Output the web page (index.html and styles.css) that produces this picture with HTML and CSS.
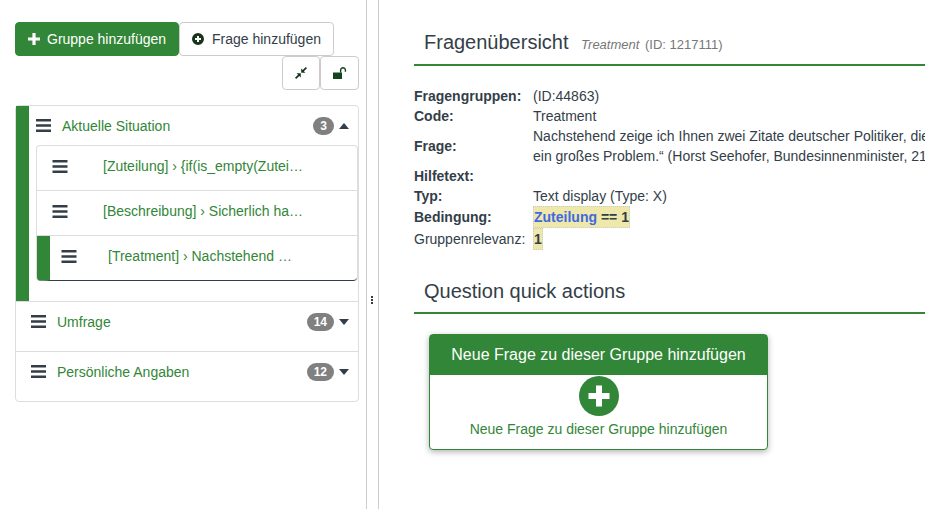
FILE: index.html
```html
<!DOCTYPE html>
<html lang="de">
  <head>
    <meta charset="UTF-8" />
    <meta name="viewport" content="width=device-width, initial-scale=1.0" />
    <title>Fragenübersicht</title>
    <link rel="stylesheet" href="styles.css">
  </head>
  <body>
    <!-- Sidebar -->
    <aside class="sidebar">
      <div class="toolbar">
        <a class="btn btn-primary" href="#">
          <svg class="btn-icon" viewBox="0 0 12 12"><path d="M4.4 0h3.2v4.4H12v3.2H7.6V12H4.4V7.6H0V4.4h4.4z" fill="#fff"/></svg>
          Gruppe hinzufügen
        </a>
        <a class="btn btn-default" href="#">
          <svg class="btn-icon" viewBox="0 0 12 12"><path fill-rule="evenodd" d="M6 0a6 6 0 1 1 0 12A6 6 0 0 1 6 0zM5 3v2H3v2h2v2h2V7h2V5H7V3z" fill="#16351b"/></svg>
          Frage hinzufügen
        </a>
      </div>
      <div class="toolbar toolbar-right">
        <a class="btn btn-default btn-square" href="#" aria-label="Einklappen">
          <svg class="btn-icon" viewBox="0 0 12 12"><path d="M12 1.200 8.900 4.300 10.400 5.800H6.200V1.600l1.500 1.500L10.800 0zM0 10.800 3.100 7.700 1.600 6.200h4.200v4.200L4.300 8.900 1.200 12z" fill="#16351b"/></svg>
        </a>
        <a class="btn btn-default btn-square" href="#" aria-label="Entsperren">
          <svg class="btn-icon btn-icon-lock" viewBox="0 0 14 12"><path d="M0 5.500h9V12H0z" fill="#14451c"/><path d="M7.600 5.500V3.200a2.400 2.400 0 0 1 4.800 0v1.600" fill="none" stroke="#14451c" stroke-width="1.400"/></svg>
        </a>
      </div>

      <div class="groups">
        <section class="group group-open">
          <div class="group-head">
            <svg class="bars" viewBox="0 0 15 13"><path d="M0 0h15v2.600H0zM0 5.200h15v2.600H0zM0 10.400h15V13H0z"/></svg>
            <a class="group-name" href="#">Aktuelle Situation</a>
            <span class="badge">3</span>
            <span class="caret caret-up"></span>
          </div>
          <ul class="questions">
            <li class="question">
              <svg class="bars" viewBox="0 0 15 13"><path d="M0 0h15v2.600H0zM0 5.200h15v2.600H0zM0 10.400h15V13H0z"/></svg>
              <a class="question-name" href="#">[Zuteilung] › {if(is_empty(Zutei…</a>
            </li>
            <li class="question">
              <svg class="bars" viewBox="0 0 15 13"><path d="M0 0h15v2.600H0zM0 5.200h15v2.600H0zM0 10.400h15V13H0z"/></svg>
              <a class="question-name" href="#">[Beschreibung] › Sicherlich ha…</a>
            </li>
            <li class="question question-active">
              <svg class="bars" viewBox="0 0 15 13"><path d="M0 0h15v2.600H0zM0 5.200h15v2.600H0zM0 10.400h15V13H0z"/></svg>
              <a class="question-name" href="#">[Treatment] › Nachstehend …</a>
            </li>
          </ul>
        </section>
        <section class="group">
          <div class="group-head">
            <svg class="bars" viewBox="0 0 15 13"><path d="M0 0h15v2.600H0zM0 5.200h15v2.600H0zM0 10.400h15V13H0z"/></svg>
            <a class="group-name" href="#">Umfrage</a>
            <span class="badge">14</span>
            <span class="caret"></span>
          </div>
        </section>
        <section class="group">
          <div class="group-head">
            <svg class="bars" viewBox="0 0 15 13"><path d="M0 0h15v2.600H0zM0 5.200h15v2.600H0zM0 10.400h15V13H0z"/></svg>
            <a class="group-name" href="#">Persönliche Angaben</a>
            <span class="badge">12</span>
            <span class="caret"></span>
          </div>
        </section>
      </div>
    </aside>

    <!-- Resize handle -->
    <div class="splitter"><span class="grip"></span></div>

    <!-- Question overview -->
    <main class="content">
      <h2 class="section-title">Fragenübersicht <small class="title-meta"><em>Treatment</em> (ID: 1217111)</small></h2>
      <table class="summary">
        <tr><th>Fragengruppen:</th><td>(ID:44863)</td></tr>
        <tr><th>Code:</th><td>Treatment</td></tr>
        <tr><th>Frage:</th><td>Nachstehend zeige ich Ihnen zwei Zitate deutscher Politiker, die<br>ein großes Problem.“ (Horst Seehofer, Bundesinnenminister, 21</td></tr>
        <tr><th>Hilfetext:</th><td></td></tr>
        <tr><th>Typ:</th><td>Text display (Type: X)</td></tr>
        <tr><th>Bedingung:</th><td><span class="expr"><a href="#">Zuteilung</a> == 1</span></td></tr>
        <tr><th class="plain">Gruppenrelevanz:</th><td><span class="expr">1</span></td></tr>
      </table>

      <h2 class="section-title section-actions">Question quick actions</h2>
      <a class="action-card" href="#">
        <div class="action-head">Neue Frage zu dieser Gruppe hinzufügen</div>
        <div class="action-body">
          <svg class="action-icon" viewBox="0 0 40 40"><circle cx="20" cy="20" r="20" fill="#328637"/><path d="M17 9.500h6V17h7.500v6H23v7.500h-6V23H9.500v-6H17z" fill="#fff"/></svg>
          <span class="action-label">Neue Frage zu dieser Gruppe hinzufügen</span>
        </div>
      </a>
    </main>
  </body>
</html>
```

FILE: styles.css
```css
/* ---------- Base ---------- */
*{box-sizing:border-box;margin:0;padding:0;}
html,body{height:100%;overflow:hidden;}
body{display:flex;background:#fff;color:#333e48;font-family:"Liberation Sans",Arial,sans-serif;font-size:14px;line-height:20px;}
a{text-decoration:none;}

/* ---------- Sidebar ---------- */
.sidebar{flex:0 0 367px;height:100%;padding:22px 7px 0 15px;border-right:1px solid #ccc;}
.toolbar{display:flex;}
.toolbar-right{justify-content:flex-end;}
.btn{display:flex;align-items:center;height:34px;padding:0 12px;border:1px solid #ccc;border-radius:4px;color:#333e48;white-space:nowrap;}
.btn-primary{width:164px;background:#328637;border-color:#328637;color:#fff;}
.btn-default{width:155px;background:#fff;}
.btn-square{justify-content:center;width:38px;padding:0;}
.btn-square + .btn-square{width:39px;}
.btn-icon{flex:none;width:12px;height:12px;margin-right:7px;}
.btn-default .btn-icon{margin-right:8px;}
.btn-square .btn-icon{margin:0;}
.btn-square .btn-icon-lock{width:14px;}

.groups{margin-top:15px;width:344px;border:1px solid #ddd;border-radius:4px;}
.group{height:50px;border-top:1px solid #ddd;}
.group:first-child{border-top:0;}
.group-open{height:195px;border-left:13px solid #328637;}
.group-head{display:flex;align-items:center;height:39px;padding:0 9px 0 15px;}
.group-open .group-head{padding-left:7px;}
.group-name{flex:1;margin-left:11px;color:#328637;}
.bars{flex:none;width:15px;height:13px;fill:#333e48;}
.badge{min-width:20px;padding:0 7px;border-radius:10px;background:#808080;color:#fff;font-size:12px;font-weight:700;line-height:18px;text-align:center;}
.caret{width:0;height:0;margin-left:5px;border-left:5.500px solid transparent;border-right:5.500px solid transparent;border-top:6px solid #333e48;}
.caret-up{border-top:0;border-bottom:6px solid #333e48;}

.questions{list-style:none;width:322px;margin-left:7px;border:1px solid #ddd;border-bottom:0;border-radius:4px;}
.question{display:flex;align-items:center;height:45px;padding:0 0 4px 15px;border-bottom:1px solid #ddd;}
.question .bars{width:16px;}
.question-name{margin-left:35px;color:#328637;white-space:nowrap;}
.question-active{padding-left:11px;border-left:13px solid #328637;border-bottom-color:#333e48;border-radius:0 0 4px 4px;}
.question-active .question-name{margin-left:31px;}

/* ---------- Splitter ---------- */
.splitter{flex:0 0 12px;height:100%;padding-top:296px;border-right:1px solid #ccc;}
.grip{display:block;width:2px;height:8px;margin-left:4px;background:repeating-linear-gradient(#333e48 0 2px,transparent 2px 3px);}

/* ---------- Content ---------- */
.content{flex:1;min-width:0;padding:24px 0 0 35px;overflow:hidden;}
.section-title{padding:0 10px 4px;border-bottom:2px solid #328637;font-size:20px;font-weight:400;line-height:36px;white-space:nowrap;}
.title-meta{margin-left:7px;color:#777;font-size:13px;line-height:1;}
.title-meta em{margin-right:2px;}

.summary{width:700px;margin-top:20px;border-collapse:collapse;table-layout:fixed;white-space:nowrap;}
.summary th{width:119px;padding:0;font-weight:700;text-align:left;}
.summary th.plain{font-weight:400;}
.summary td{padding:0;}
.expr{display:inline-block;border:1px dotted #ccc;background:#eee8aa;font-weight:700;line-height:20px;}
.expr a{color:#4169e1;}

.section-actions{margin-top:23px;padding-bottom:3px;}

.action-card{display:block;width:339px;height:116px;margin:20px 0 0 15px;border:1px solid #328637;border-radius:4px;box-shadow:0 2px 6px rgba(0,0,0,.3);background:#fff;color:#328637;}
.action-head{height:40px;background:#328637;color:#fff;font-size:16px;line-height:40px;text-align:center;}
.action-body{display:flex;flex-direction:column;align-items:center;}
.action-icon{width:40px;height:40px;margin-top:1px;}
.action-label{margin-top:3px;}
```
